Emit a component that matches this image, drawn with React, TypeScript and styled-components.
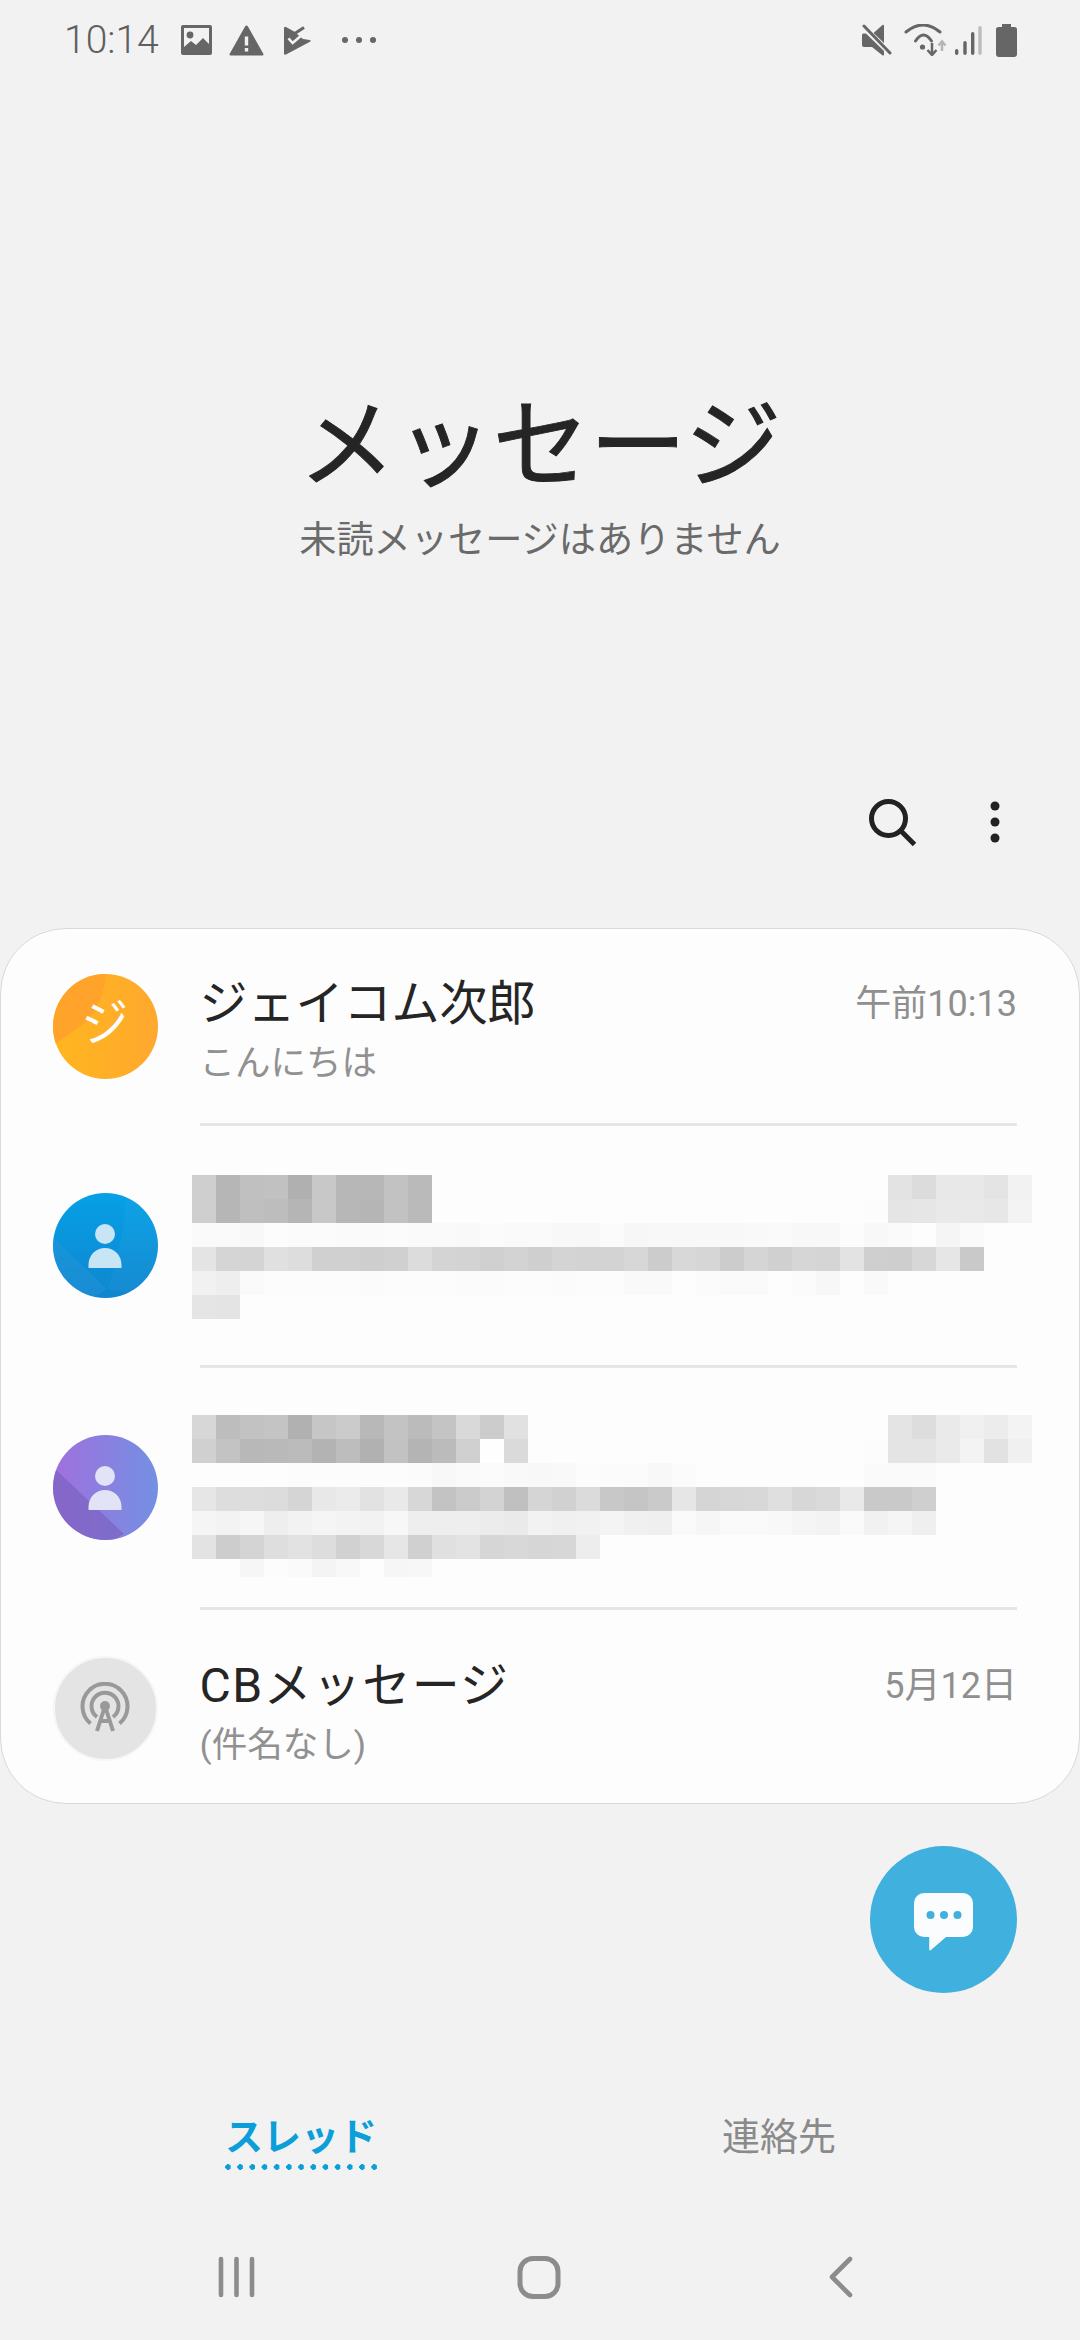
import React from "react";
import styled, { createGlobalStyle } from "styled-components";

const Global = createGlobalStyle`
  html, body { margin: 0; padding: 0; background: #f2f2f2; }
  * { box-sizing: border-box; }
`;
const FONT = `Roboto, "Noto Sans CJK JP", sans-serif`;

const Page = styled.div`
  width: 1080px; height: 2340px; background: #f2f2f2; font-family: ${FONT};
  display: flex; flex-direction: column; overflow: hidden;
`;
const StatusBar = styled.div`
  height: 80px; padding: 0 63px 0 64px; display: flex; align-items: center; justify-content: space-between; color: #666;
`;
const StatusGroup = styled.div`
  display: flex; align-items: center;
`;
const StatusIcon = styled.svg<{ $ml: number }>`
  margin-left: ${p => p.$ml}px; flex: none; display: block;
`;
const Clock = styled.span`
  font-size: 39px; font-weight: 300; color: #5f5f5f; width: 96px; white-space: nowrap;
`;
const Hero = styled.div`
  height: 700px; padding-top: 301px; display: flex; flex-direction: column; align-items: center;
`;
const Title = styled.h1`
  margin: 0; font-size: 97px; line-height: 130px; font-weight: 400; color: #252525;
  -webkit-text-stroke: 0.9px #252525;
`;
const Subtitle = styled.div`
  font-size: 37.2px; line-height: 50px; color: #6a6a6a; margin-top: 4px;
`;
const Actions = styled.div`
  height: 148px; display: flex; align-items: flex-start; justify-content: flex-end; gap: 72px; padding: 17px 79px 0 0;
`;
const Card = styled.div`
  width: 1080px; height: 876px; background: #fdfdfd; border: 1.5px solid #d9d9d9; border-radius: 66px; flex: none;
  display: flex; flex-direction: column;
`;
const Row = styled.div<{ $h: number; $pt?: number }>`
  height: ${p => p.$h}px; flex: none; display: flex; padding-left: 51.5px; align-items: center;
  padding-top: ${p => p.$pt ?? 0}px;
`;
const Avatar = styled.div<{ $bg: string; $ring?: boolean }>`
  position: relative; width: 105px; height: 105px; flex: none; border-radius: 50%; background: ${p => p.$bg}; overflow: hidden;
  display: flex; align-items: center; justify-content: center;
  border: ${p => (p.$ring ? "2px solid #f6f6f6" : "none")};
`;
const Facet = styled.svg`
  position: absolute; inset: 0; display: block;
`;
const Initial = styled.span`
  position: relative; color: #fff; font-size: 48px; line-height: 1; display: block;
  transform: rotate(-6deg) translate(1px, -2px);
`;
const Body = styled.div`
  flex: 1; padding: 9px 62px 0 42px; display: flex; flex-direction: column;
`;
const Line = styled.div`
  display: flex; justify-content: space-between; align-items: center;
`;
const Name = styled.div<{ $spacing?: number }>`
  font-size: 48px; line-height: 60px; color: #252525; letter-spacing: ${p => p.$spacing ?? 0}px;
`;
const Time = styled.div`
  font-size: 36px; line-height: 60px; color: #8f8f8f;
`;
const Preview = styled.div`
  font-size: 35.5px; line-height: 50px; color: #919191; margin-top: 4px;
`;
const Divider = styled.div`
  height: 3px; flex: none; background: #e6e6e6; margin: 0 62px 0 199px;
`;
const Mosaic = styled.div<{ $top: number; $h: number }>`
  display: grid; grid-template-columns: repeat(35, 24px); grid-auto-rows: 24px; width: 840px; height: ${p => p.$h}px;
  overflow: hidden; margin-left: 34px; align-self: flex-start; margin-top: ${p => p.$top}px; flex: none;
`;
const Cell = styled.div<{ $v: string }>`
  background: #${p => p.$v};
`;
const FabRow = styled.div`
  height: 307px; padding: 42px 63px 0 0; display: flex; justify-content: flex-end; align-items: flex-start; flex: none;
`;
const Fab = styled.div`
  width: 147px; height: 147px; border-radius: 50%; background: #40b1de; display: flex; align-items: center; justify-content: center;
`;
const FabIcon = styled.svg`
  margin-top: 6px; display: block;
`;
const TabBar = styled.div`
  display: flex; align-items: flex-start; padding-left: 225px; gap: 345px; height: 135px; flex: none;
`;
const ActiveTab = styled.div`
  font-size: 38px; line-height: 52px; font-weight: 700; color: #0b9ed8; width: 152px; text-align: center;
  display: flex; flex-direction: column;
`;
const Dots = styled.div`
  height: 6px; margin-top: 1px;
  background-image: radial-gradient(circle at 3px 3px, #0b9ed8 2.6px, transparent 3px);
  background-size: 12.2px 6px; background-repeat: repeat-x;
`;
const IdleTab = styled.div`
  font-size: 38px; line-height: 52px; color: #8a8a8a;
`;
const NavBar = styled.div`
  padding-left: 218px; display: flex; align-items: flex-start; padding-top: 8px;
`;
const NavSlot = styled.div<{ $w: number }>`
  width: ${p => p.$w}px; flex: none; display: flex;
`;
const PersonWrap = styled.div<{ $c: string }>`
  position: relative; color: ${p => p.$c}; display: flex;
`;

const M1 = [
  "cf b6 c0 c1 b0 c8 b7 b7 c2 ba - - - - - - - - - - - - - - - - - - - e3 dc e8 e8 e4 f2",
  "cf b6 bf bd b5 c8 b7 b5 c2 ba - - - - - - - - - - - - - - - - - - fc e5 e6 e9 e9 e7 f3",
  "fa fa f8 fc fb fb fa fa fb fa fa f9 fb fa fa f8 f8 fb f7 f8 f8 f8 f8 f9 fa f8 f8 fc f8 fa fd f5 fa - -",
  "e4 d5 d4 e0 dd d0 d0 ce d0 dc d4 d3 d0 d3 cf d4 d3 d3 d7 cc d8 d6 cc d5 d0 d6 d5 e3 cf ce d7 e6 c9 - -",
  "f1 ee fa fc fc fc fc fb fc fc fc fb fb fc fc fb fc fc f9 f9 fd fb fa fa fd fb f7 fd f9 - - - - - -",
  "e5 e4",
];
const M2 = [
  "d7 bd c2 c4 b1 c6 cb b8 c3 bb c4 d9 cc e1 - - - - - - - - - - - - - - - e4 dd ea f0 ec f3",
  "d0 c3 b8 b9 bb b3 bd b1 c2 b4 bb d0 fe da - - - - - - - - - - - - - - fc e4 e4 ea f3 e2 f0",
  "- - - - fc fc fc fc fc fb f8 fa fb f9 f8 f9 fc fb fb f8 fb - - - - - - - fa fa fa - - - -",
  "e6 dd dd dc d5 e8 eb e2 e9 d7 c3 cb d3 c0 d5 d1 db c8 c5 ca e6 d5 d7 d8 df d7 da e9 c9 c9 cf - - - -",
  "f5 f3 f6 ee f2 f5 f3 f2 f7 ee ee ee ec ea f2 f0 f1 f4 f0 ef fa f6 fa fa f8 f5 f3 fa f1 f5 ef - - - -",
  "e3 cd d4 de e2 dd d1 d8 e6 d0 e0 e3 d6 d8 d6 d7 ed",
  "- - f6 fc fa f4 f8 fd f6 f7",
];

function MosaicBlock({ rows, top, h }: { rows: string[]; top: number; h: number }) {
  return (
    <Mosaic $top={top} $h={h}>
      {rows.flatMap((r, i) => {
        const parts = r.split(" ");
        const full = [...parts, ...Array(35 - parts.length).fill("-")];
        return full.map((v, j) => <Cell key={`${i}-${j}`} $v={v === "-" ? "fdfdfd" : v.repeat(3)} />);
      })}
    </Mosaic>
  );
}

const Person = () => (
  <svg width="34" height="44" viewBox="0 0 34 44">
    <circle cx="17" cy="10" r="10" fill="currentColor" />
    <path d="M0.5 44V40.500A16.500 16.500 0 0 1 33.500 40.500V44Z" fill="currentColor" />
  </svg>
);

const App = () => (
  <Page>
    <Global />
    <StatusBar>
      <StatusGroup>
        <Clock>10:14</Clock>
        <StatusIcon $ml={21} width="31" height="30" viewBox="0 0 31 30">
          <path fillRule="evenodd" fill="#666" d="M2 0h27a2 2 0 0 1 2 2v26a2 2 0 0 1-2 2H2a2 2 0 0 1-2-2V2a2 2 0 0 1 2-2zM3 3v19l7-6 5 4 7-7 6 6V3z" />
          <circle cx="9" cy="10" r="3.400" fill="#666" />
        </StatusIcon>
        <StatusIcon $ml={17} width="35" height="31" viewBox="0 0 35 31">
          <path fillRule="evenodd" fill="#666" d="M17.500 0.500a1.500 1.500 0 0 1 1.300.8l15.500 27.400a1.300 1.300 0 0 1-1.100 1.800H1.800a1.300 1.300 0 0 1-1.100-1.800L16.200 1.300a1.500 1.500 0 0 1 1.300-.8zM15.800 11.500v9h3.400v-9zM15.800 23v3.500h3.400V23z" />
        </StatusIcon>
        <StatusIcon $ml={20} width="27" height="29" viewBox="0 0 27 29">
          <path fill="#666" d="M0 2a1.300 1.300 0 0 1 2-1l9 5 2 2 6 5 7 1a1 1 0 0 1 0 1.800L2 28.500a1.300 1.300 0 0 1-2-1z" />
          <path d="M4.500 12.300l4.200 4.700L19 8" fill="none" stroke="#f2f2f2" strokeWidth="2.600" />
          <path d="M10 7l10-6.500" stroke="#666" strokeWidth="3" transform="translate(0 1)" />
          <path d="M19 8l7 5.500" stroke="#f2f2f2" strokeWidth="2" />
        </StatusIcon>
        <StatusIcon $ml={30} width="36" height="8" viewBox="0 0 36 8">
          <circle cx="4" cy="4" r="3" fill="#666" /><circle cx="18" cy="4" r="3" fill="#666" /><circle cx="32" cy="4" r="3" fill="#666" />
        </StatusIcon>
      </StatusGroup>
      <StatusGroup>
        <StatusIcon $ml={0} width="30" height="32" viewBox="0 0 30 32">
          <path fill="#666" d="M0 11a1.500 1.500 0 0 1 1.500-1.500H4L22 27v3.500a1 1 0 0 1-1.600.8L10 23H2a2 2 0 0 1-2-2zM22 1.500V19L11.500 9l9-8a1 1 0 0 1 1.500.5z" />
          <path d="M2 2l26 27" stroke="#666" strokeWidth="3" strokeLinecap="round" />
        </StatusIcon>
        <StatusIcon $ml={12} width="44" height="32" viewBox="0 0 44 32">
          <g fill="none" stroke="#666" strokeWidth="3" strokeLinecap="round">
            <path d="M2 8Q19-6 36 8" /><path d="M11.500 17Q19.500 5 27.500 17" />
          </g>
          <circle cx="18.500" cy="23" r="2.600" fill="#666" />
          <path d="M28 19v12M23.500 26l4.500 5 4.500-5" fill="none" stroke="#666" strokeWidth="2.500" />
          <path d="M38 27V18M34.500 21.500l3.500-4 3.500 4" fill="none" stroke="#b5b5b5" strokeWidth="2.500" />
        </StatusIcon>
        <StatusIcon $ml={6} width="30" height="32" viewBox="0 0 30 32">
          <g strokeWidth="3.400" strokeLinecap="round">
            <path d="M2.700 29.300v-2.600M11 29.300V18.700M18.700 29.300V9.700" stroke="#666" /><path d="M26 29.300V3.700" stroke="#bdbdbd" />
          </g>
        </StatusIcon>
        <StatusIcon $ml={12} width="21" height="33" viewBox="0 0 21 33">
          <path fill="#666" d="M6 0h9v3h3.500A2.500 2.500 0 0 1 21 5.500V30a3 3 0 0 1-3 3H3a3 3 0 0 1-3-3V5.500A2.500 2.500 0 0 1 2.500 3H6z" />
        </StatusIcon>
      </StatusGroup>
    </StatusBar>
    <Hero>
      <Title>メッセージ</Title>
      <Subtitle>未読メッセージはありません</Subtitle>
    </Hero>
    <Actions>
      <svg width="50" height="50" viewBox="0 0 50 50" fill="none" stroke="#222" strokeWidth="5">
        <circle cx="21.500" cy="21.500" r="17" /><path d="M33.500 33.500l14 14" />
      </svg>
      <svg width="12" height="50" viewBox="0 0 12 50" fill="#222">
        <circle cx="6" cy="9" r="4.500" /><circle cx="6" cy="25" r="4.500" /><circle cx="6" cy="41" r="4.500" />
      </svg>
    </Actions>
    <Card>
      <Row $h={194}>
        <Avatar $bg="linear-gradient(90deg,#ffb61f,#ffa82e)">
          <Facet width="105" height="105" viewBox="0 0 105 105">
            <path d="M0 0H53C50 25 42 40 33 48L4 69 0 72Z" fill="#ffa32a" />
          </Facet>
          <Initial>ジ</Initial>
        </Avatar>
        <Body>
          <Line><Name>ジェイコム次郎</Name><Time>午前10:13</Time></Line>
          <Preview>こんにちは</Preview>
        </Body>
      </Row>
      <Divider />
      <Row $h={239}>
        <Avatar $bg="linear-gradient(180deg,#06a0e6,#0f86cf)">
          <Facet width="105" height="105" viewBox="0 0 105 105">
            <path d="M0 44L54 96 40 105H0Z" fill="#2a96d8" opacity=".4" />
            <path d="M73 0C72 35 64 70 54 96L105 105V0Z" fill="#fff" opacity=".03" />
          </Facet>
          <PersonWrap $c="#c7e5f5"><Person /></PersonWrap>
        </Avatar>
        <MosaicBlock rows={M1} top={49} h={144} />
      </Row>
      <Divider />
      <Row $h={239}>
        <Avatar $bg="linear-gradient(90deg,#a070dd,#7390e3)">
          <Facet width="105" height="105" viewBox="0 0 105 105">
            <path d="M0 32L71 99 60 105H0Z" fill="#7a62c0" opacity=".7" />
          </Facet>
          <PersonWrap $c="#e2e3f6"><Person /></PersonWrap>
        </Avatar>
        <MosaicBlock rows={M2} top={47} h={162} />
      </Row>
      <Divider />
      <Row $h={192} $pt={4}>
        <Avatar $bg="#e4e4e4" $ring>
          <svg width="52" height="52" viewBox="0 0 52 52" fill="none" stroke="#999" strokeWidth="4">
            <path d="M11.500 41.500A22.500 22.500 0 1 1 40.500 41.500" />
            <path d="M18 35A13.500 13.500 0 1 1 34 35" />
            <circle cx="26" cy="24" r="5" fill="#999" stroke="none" />
            <path d="M26 24l-8 25M26 24l8 25M21 39h10" />
          </svg>
        </Avatar>
        <Body>
          <Line><Name $spacing={1.4}>CBメッセージ</Name><Time>5月12日</Time></Line>
          <Preview>(件名なし)</Preview>
        </Body>
      </Row>
    </Card>
    <FabRow>
      <Fab>
        <FabIcon width="60" height="60" viewBox="0 0 60 60">
          <path fill="#fbfcfd" d="M10 0h39a10 10 0 0 1 10 10v24a10 10 0 0 1-10 10H32L17 57a1 1 0 0 1-1.800-.8V44H10A10 10 0 0 1 0 34V10A10 10 0 0 1 10 0z" />
          <circle cx="16.500" cy="22" r="4" fill="#40b1de" /><circle cx="30" cy="22" r="4" fill="#40b1de" /><circle cx="43.500" cy="22" r="4" fill="#40b1de" />
        </FabIcon>
      </Fab>
    </FabRow>
    <TabBar>
      <ActiveTab>スレッド<Dots /></ActiveTab>
      <IdleTab>連絡先</IdleTab>
    </TabBar>
    <NavBar>
      <NavSlot $w={299}>
        <svg width="40" height="46" viewBox="0 0 40 46" stroke="#8c8c8c" strokeWidth="4.600" strokeLinecap="round">
          <path d="M3 5v36M18.500 5v36M34 5v36" />
        </svg>
      </NavSlot>
      <NavSlot $w={311}>
        <svg width="44" height="46" viewBox="0 0 44 46" fill="none" stroke="#8c8c8c" strokeWidth="5">
          <rect x="3" y="4.500" width="38" height="38" rx="13" />
        </svg>
      </NavSlot>
      <NavSlot $w={30}>
        <svg width="26" height="46" viewBox="0 0 26 46" fill="none" stroke="#8c8c8c" strokeWidth="4.600" strokeLinecap="round" strokeLinejoin="round">
          <path d="M22 5L4 23l18 18" />
        </svg>
      </NavSlot>
    </NavBar>
  </Page>
);

export default App;
